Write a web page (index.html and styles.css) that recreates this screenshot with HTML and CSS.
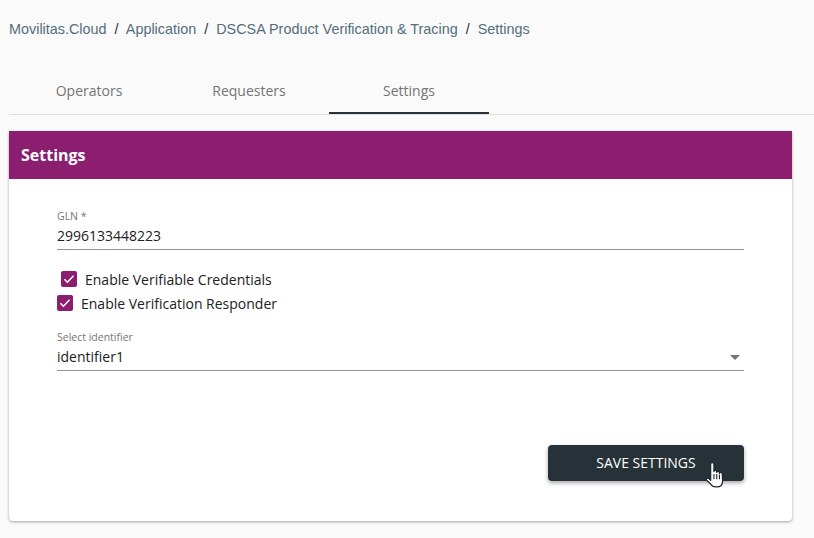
FILE: index.html
```html
<!DOCTYPE html>
<html lang="en">

<head>
  <meta charset="UTF-8" />
  <meta name="viewport" content="width=device-width, initial-scale=1" />
  <title>Settings</title>
  <link rel="stylesheet" href="styles.css">
</head>

<body>
  <nav class="breadcrumb">
    <a>Movilitas.Cloud</a>
    <span class="sep">/</span>
    <a>Application</a>
    <span class="sep">/</span>
    <a>DSCSA Product Verification &amp; Tracing</a>
    <span class="sep">/</span>
    <a>Settings</a>
  </nav>

  <div class="tabs">
    <div class="tab">Operators</div>
    <div class="tab">Requesters</div>
    <div class="tab active">Settings</div>
  </div>

  <section class="card">
    <h2 class="card-title">Settings</h2>
    <form class="card-body">
      <div class="field">
        <div class="field-label">GLN *</div>
        <div class="field-value gln-value">2996133448223</div>
      </div>

      <div class="checks">
        <label class="check check-first">
          <span class="box">
            <svg viewBox="0 0 16 16" width="16" height="16"><path d="M3.4 8.2l3 3 6.2-6.4" fill="none" stroke="#fff" stroke-width="1.5" /></svg>
          </span>
          Enable Verifiable Credentials
        </label>
        <label class="check">
          <span class="box">
            <svg viewBox="0 0 16 16" width="16" height="16"><path d="M3.4 8.2l3 3 6.2-6.4" fill="none" stroke="#fff" stroke-width="1.5" /></svg>
          </span>
          Enable Verification Responder
        </label>
      </div>

      <div class="field">
        <div class="field-label">Select identifier</div>
        <div class="field-value select-value">
          identifier1
          <span class="caret"></span>
        </div>
      </div>

      <div class="actions">
        <button type="button" class="save-button">Save settings</button>
        <svg class="cursor" viewBox="0 0 18 24" width="20" height="26">
          <path d="M5 2.200c0-2.200 3-2.200 3 0V9c0-1.600 2.600-1.600 2.600 0v.8c0-1.500 2.500-1.500 2.500 0v.8c0-1.300 2.600-1.300 2.600.2l.3 6.700c0 3.400-2.200 5.500-5.300 5.500H9.500c-2.300 0-3.500-1-4.500-2.700L1.200 16.900c-.8-1.400.9-2.600 2.100-1.600L5 17z" fill="#fff" stroke="#1b2530" stroke-width="1.100" stroke-linejoin="round" />
          <path d="M8 11v5M10.600 11v5M13.100 11.500v4.500" fill="none" stroke="#1b2530" stroke-width="1" />
        </svg>
      </div>
    </form>
  </section>
</body>

</html>
```

FILE: styles.css
```css
body {
  font-family: 'Open Sans', sans-serif;
  background-color: #fafafa;
  color: #212121;
  margin: 0;
  padding: 0;
  height: 538px;
  overflow: hidden;
}

.breadcrumb {
  font-family: 'Liberation Sans', Arial, sans-serif;
  font-size: 14.4px;
  line-height: 18px;
  color: #546e7a;
  padding: 20px 0 0 9px;
  height: 38px;
  white-space: nowrap;
}

.breadcrumb .sep {
  color: #263238;
  margin: 0 4px;
}

.tabs {
  display: flex;
  margin-left: 9px;
  margin-top: 10px;
  height: 46px;
  border-bottom: 1px solid #e0e0e0;
}

.tab {
  width: 160px;
  height: 46px;
  line-height: 46px;
  text-align: center;
  font-size: 14px;
  color: #757575;
  box-sizing: border-box;
}

.tab.active {
  border-bottom: 2px solid #263238;
}

.card {
  margin: 16px 22px 0 9px;
  height: 390px;
  background: white;
  border-radius: 0 0 4px 4px;
  box-shadow: 0 1px 3px rgba(0 0 0 / 0.35);
}

.card-title {
  margin: 0;
  height: 48px;
  line-height: 48px;
  padding-left: 12px;
  background-color: #8b1e6f;
  color: white;
  font-size: 16px;
  font-weight: 700;
}

.card-body {
  padding: 30px 48px 0;
}

.field {
  border-bottom: 1px solid #949494;
}

.field-label {
  font-size: 10.5px;
  line-height: 14px;
  color: #757575;
}

.field-value {
  font-size: 14px;
  line-height: 24px;
  height: 26px;
}

.gln-value {
  line-height: 26px;
}

.select-value {
  display: flex;
  justify-content: space-between;
  align-items: center;
}

.caret {
  width: 0;
  height: 0;
  margin-right: 4px;
  border-left: 5px solid transparent;
  border-right: 5px solid transparent;
  border-top: 5px solid #757575;
}

.checks {
  margin: 17px 0 15px;
}

.check {
  display: flex;
  align-items: center;
  gap: 8px;
  height: 24px;
  font-size: 14px;
}

.check-first {
  margin-left: 4px;
}

.box {
  display: flex;
  width: 16px;
  height: 16px;
  border-radius: 2px;
  background-color: #8b1e6f;
}

.actions {
  position: relative;
  display: flex;
  justify-content: flex-end;
  margin-top: 74px;
}

.save-button {
  width: 196px;
  height: 36px;
  padding: 0 0 2px;
  background: #263238;
  color: white;
  font-family: 'Open Sans', sans-serif;
  font-size: 14px;
  font-weight: 500;
  text-transform: uppercase;
  border: none;
  border-radius: 4px;
  box-shadow: 0 2px 4px rgba(0 0 0 / 0.35);
  cursor: pointer;
}

.cursor {
  position: absolute;
  right: 19px;
  top: 17px;
}
```
